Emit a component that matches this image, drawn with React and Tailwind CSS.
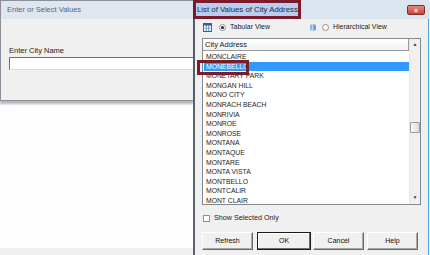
import React from "react";

const cities = [
  "MONCLAIRE",
  "MONEBELLO",
  "MONETARY PARK",
  "MONGAN HILL",
  "MONO CITY",
  "MONRACH BEACH",
  "MONRIVIA",
  "MONROE",
  "MONROSE",
  "MONTANA",
  "MONTAQUE",
  "MONTARE",
  "MONTA VISTA",
  "MONTBELLO",
  "MONTCALIR",
  "MONT CLAIR",
];

function GridIcon() {
  return (
    <svg width="9" height="9" viewBox="0 0 9 9">
      <rect x="0.5" y="0.5" width="8" height="8" fill="#fff" stroke="#2f5fae" />
      <rect x="0.5" y="0.5" width="8" height="2" fill="#2f5fae" />
      <line x1="3.2" y1="2" x2="3.2" y2="9" stroke="#2f5fae" strokeWidth="0.8" />
      <line x1="5.8" y1="2" x2="5.8" y2="9" stroke="#2f5fae" strokeWidth="0.8" />
      <line x1="0" y1="5.3" x2="9" y2="5.3" stroke="#6b8fcf" strokeWidth="0.6" />
    </svg>
  );
}

function TreeIcon() {
  return (
    <svg width="8" height="9" viewBox="0 0 8 9">
      <path d="M1 2 L3.5 1 L3.5 8 L1 7 Z" fill="#8cb8e8" />
      <path d="M4.2 1 L7 2 L7 7 L4.2 8 Z" fill="#6fa2dc" />
    </svg>
  );
}

function Radio({ checked }) {
  return (
    <span className="w-[7px] h-[7px] rounded-full border border-[#8f8f8f] bg-white flex items-center justify-center">
      {checked && <span className="w-[3px] h-[3px] rounded-full bg-[#222]" />}
    </span>
  );
}

function Btn({ children, w, focused }) {
  return (
    <div
      className={
        "h-[18px] flex items-center justify-center text-[7px] text-[#111] bg-[#f0f0f0] " +
        (focused
          ? "border border-[#1a1a1a] shadow-[inset_-1px_-1px_0_#6d6d6d,inset_1px_1px_0_#ffffff]"
          : "border-t border-l border-t-[#ffffff] border-l-[#ffffff] border-b border-r border-b-[#6b6b6b] border-r-[#6b6b6b] shadow-[inset_-1px_-1px_0_#a8a8a8]")
      }
      style={{ width: w }}
    >
      {children}
    </div>
  );
}

export default function App() {
  return (
    <div className="w-[430px] h-[255px] flex overflow-hidden bg-white font-['Liberation_Sans',Arial,sans-serif]">
      {/* Left column */}
      <div className="w-[193px] flex flex-col">
        <div className="h-[101px] border border-[#8a9099] border-r-0 bg-[#f0f0f0] flex flex-col shadow-[0_3px_2px_rgba(0,0,0,0.28)] relative z-10">
          <div className="h-[18px] bg-[#dfe6ee] flex items-center pl-[6px] text-[7.5px] text-[#56657a]">
            Enter or Select Values
          </div>
          <div className="pt-[27px] pl-[8px]">
            <div className="text-[7.5px] leading-[9px] text-[#222]">Enter City Name</div>
            <div className="mt-[2px] h-[13px] bg-white border-t border-l border-t-[#6e6e6e] border-l-[#6e6e6e] border-b border-b-[#dcdcdc]" />
          </div>
        </div>
        <div className="flex-1 bg-[#fdfdfd]" />
        <div className="h-[7px] bg-[#f0f0f0]" />
      </div>

      {/* Right dialog */}
      <div className="w-[237px] bg-[#f0f0f0] border-l-2 border-[#5b6270] flex flex-col relative shadow-[inset_-1px_0_0_#fafafa,inset_-2px_0_0_#4aa6e0]">
        <div className="h-[19px] bg-[#dbe5f0] flex items-center relative">
          <div className="absolute left-[-2px] top-0 w-[108px] h-[19px] border-[3px] border-[#7b1c2c] bg-[#b9cdee] flex items-center pl-[1px] text-[7.8px] text-[#17284a] whitespace-nowrap">
            List of Values of City Address
          </div>
          <div className="absolute left-[212px] top-[5px] w-[18px] h-[10px] rounded-[2px] border border-[#8a2a26] bg-gradient-to-b from-[#e48a7c] to-[#c2443a] flex items-center justify-center text-white text-[7px] font-bold leading-none">
            ×
          </div>
        </div>

        {/* view radios */}
        <div className="mt-[3px] h-[11px] flex items-center pl-[8px] text-[7px] text-[#222]">
          <GridIcon />
          <span className="ml-[7px]"><Radio checked /></span>
          <span className="ml-[4px]">Tabular View</span>
          <span className="ml-[39px]"><TreeIcon /></span>
          <span className="ml-[5px]"><Radio /></span>
          <span className="ml-[4px]">Hierarchical View</span>
        </div>

        {/* list box */}
        <div className="mt-[5px] ml-[7px] w-[219px] h-[167px] border border-[#828790] bg-white flex">
          <div className="flex-1 flex flex-col overflow-hidden">
            <div className="h-[12px] shrink-0 bg-gradient-to-b from-[#ffffff] to-[#eef0f2] border-b border-r border-[#9a9a9a] flex items-center pl-[2px] text-[7.5px] text-[#222]">
              City Address
            </div>
            <div className="pt-[1px] flex flex-col">
              {cities.map((c, i) => (
                <div
                  key={c}
                  className={
                    "h-[9.6px] leading-[9.6px] text-[6.8px] pl-[2px] whitespace-nowrap " +
                    (i === 1 ? "bg-[#3399ff] text-white ml-[1px]" : "text-[#222] ml-[1px]")
                  }
                >
                  {c}
                </div>
              ))}
            </div>
          </div>
          {/* scrollbar */}
          <div className="w-[11px] bg-[#f0f0f0] border-l border-[#e6e6e6] flex flex-col items-center relative">
            <div className="h-[12px] flex items-center justify-center text-[5px] text-[#444]">▲</div>
            <div className="absolute top-[83px] left-[0px] w-[10px] h-[11px] rounded-[1px] border border-[#9a9a9a] bg-gradient-to-r from-[#f8f8f8] to-[#dcdcdc]" />
            <div className="flex-1" />
            <div className="h-[12px] flex items-center justify-center text-[5px] text-[#444]">▼</div>
          </div>
        </div>

        {/* Show selected */}
        <div className="mt-[8px] ml-[8px] h-[10px] flex items-center text-[7.2px] text-[#222]">
          <span className="w-[7px] h-[7px] border border-[#8f8f8f] bg-white" />
          <span className="ml-[4px]">Show Selected Only</span>
        </div>

        {/* Buttons */}
        <div className="mt-[9px] ml-[7px] flex">
          <Btn w="51px">Refresh</Btn>
          <div className="ml-[4px]"><Btn w="54px" focused>OK</Btn></div>
          <div className="ml-[2px]"><Btn w="51px">Cancel</Btn></div>
          <div className="ml-[3px]"><Btn w="51px">Help</Btn></div>
        </div>

        {/* annotation box around selected row */}
        <div className="absolute left-[2px] top-[60px] w-[52px] h-[15px] border-[3px] border-[#7b1c2c]" />
      </div>
    </div>
  );
}
